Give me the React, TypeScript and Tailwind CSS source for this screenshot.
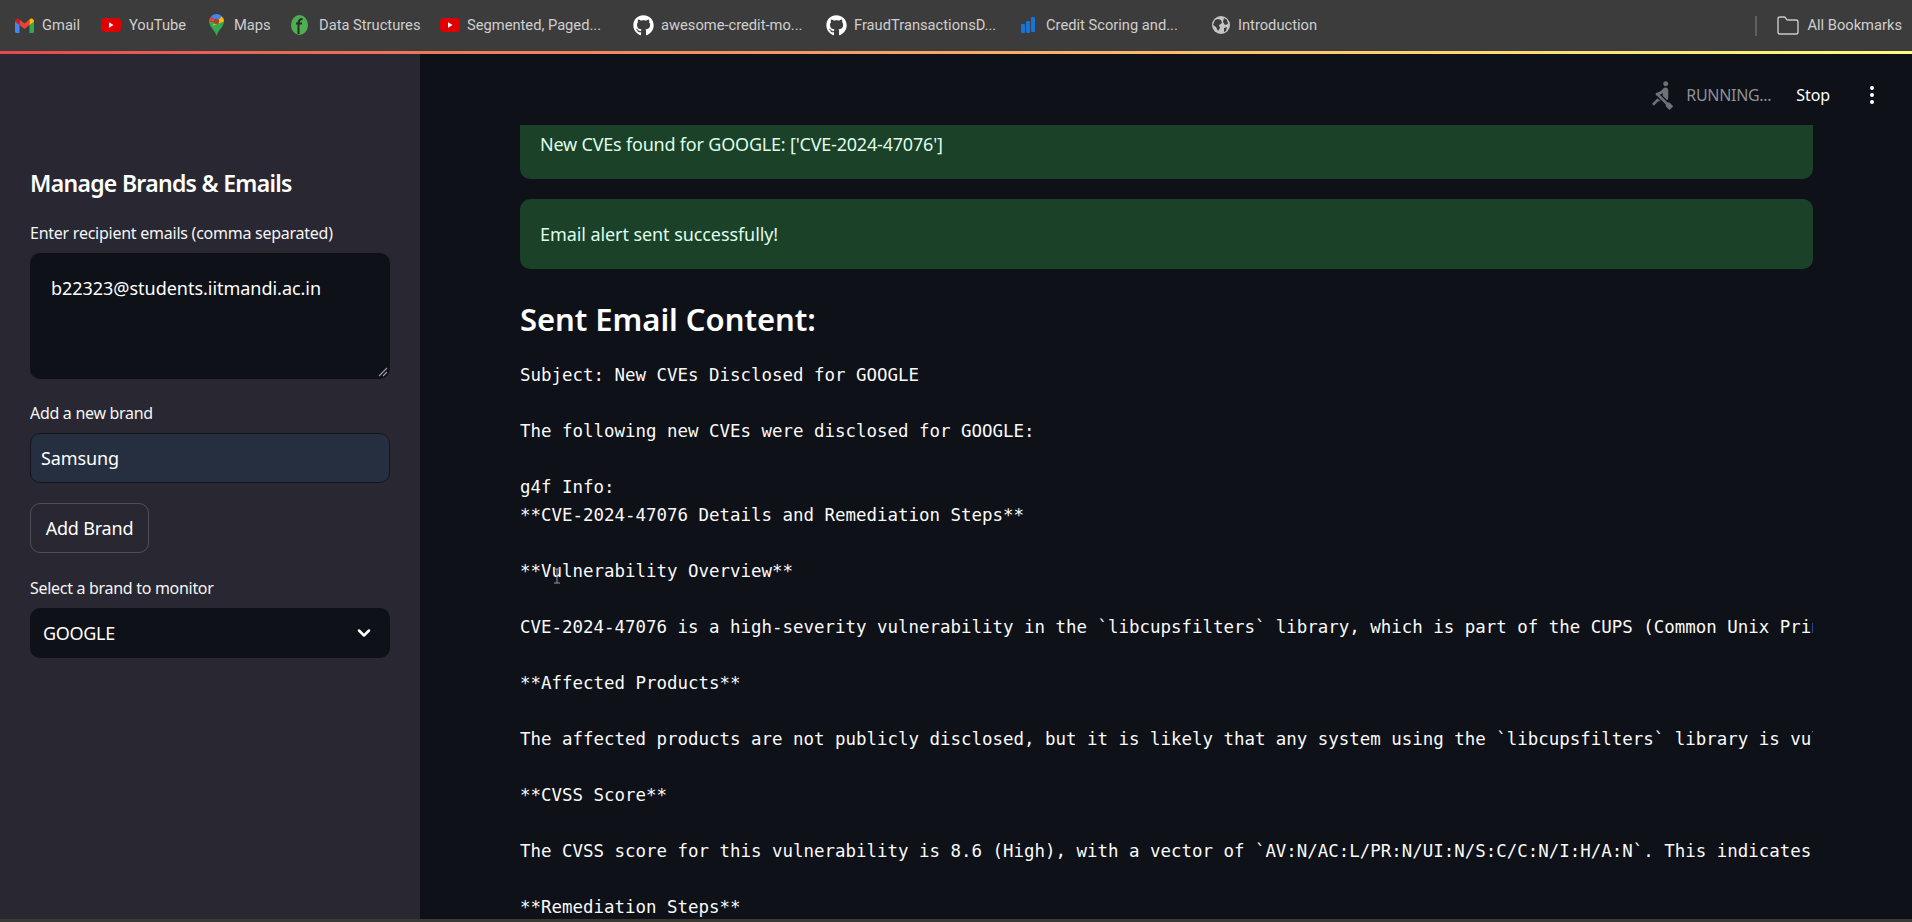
import { ChevronDown, Folder } from "lucide-react";
import { FaGithub } from "react-icons/fa";
import { MdRowing } from "react-icons/md";

const sans = "font-['Noto_Sans',sans-serif]";

function GmailIcon() {
  return (
    <svg width="19" height="15" viewBox="0 0 19 15">
      <path d="M0 3v10.5A1.5 1.5 0 0 0 1.5 15H4.500V6z" fill="#4285f4" />
      <path d="M19 3v10.500a1.500 1.500 0 0 1-1.500 1.500H14.500V6z" fill="#34a853" />
      <path d="M4.500 7V1.500L9.500 5.500l5-4V7l-5 4z" fill="#ea4335" />
      <path d="M0 3.500C0 1 2.800-.6 4.500 1.500V7L0 3.500z" fill="#c5221f" />
      <path d="M19 3.500C19 1 16.200-.6 14.500 1.500V7L19 3.500z" fill="#fbbc04" />
    </svg>
  );
}

function YoutubeIcon() {
  return (
    <svg width="20" height="14" viewBox="0 0 20 14">
      <rect width="20" height="14" rx="4" fill="#e00000" />
      <path d="M8 4.200v5.600L12.500 7z" fill="#fff" />
    </svg>
  );
}

function MapsIcon() {
  return (
    <svg width="15" height="22" viewBox="0 0 15 22">
      <path d="M7.500 22C6.500 17 0 12.500 0 7.500h15C15 12.500 8.500 17 7.500 22z" fill="#34a853" />
      <path d="M0 7.500A7.500 7.500 0 0 1 2.200 2.200L7.500 7.500z" fill="#ea4335" />
      <path d="M2.200 2.200A7.500 7.500 0 0 1 12.800 2.200L7.500 7.500z" fill="#4285f4" />
      <path d="M12.800 2.200A7.500 7.500 0 0 1 15 7.500L3 12z" fill="#fbbc04" />
      <circle cx="7.500" cy="7.500" r="2.700" fill="#a5442a" />
    </svg>
  );
}

function ForkIcon() {
  return (
    <svg width="17" height="20" viewBox="0 0 17 20">
      <ellipse cx="8.500" cy="10" rx="8.500" ry="10" fill="#4caf50" />
      <path d="M7.500 19V8.500c0-3 1.500-4.500 4-4.500M5 8.500h6" stroke="#2b2b2b" strokeWidth="2" fill="none" />
    </svg>
  );
}

function BarsIcon() {
  return (
    <svg width="14" height="17" viewBox="0 0 14 17">
      <rect x="0" y="7" width="4" height="9" rx="1" fill="#1a73d8" />
      <rect x="5" y="4" width="4" height="12" rx="1" fill="#1a73d8" />
      <rect x="10" y="0" width="4" height="15" rx="1" fill="#1a73d8" />
    </svg>
  );
}

function GlobeIcon() {
  return (
    <svg width="18" height="18" viewBox="0 0 18 18">
      <circle cx="9" cy="9" r="9" fill="#c4c4c4" />
      <path d="M3 4l3-1 3 1 1 3-3 2 1 3-2 3-2-4-3-2zM12 2l3 2 1 4-3 1-2-3zM12 12l3-1-1 4-2 1z" fill="#3c3c3c" />
    </svg>
  );
}

const bookmarks = [
  { icon: <GmailIcon />, label: "Gmail", cls: "ml-[15px] w-[86px]", gap: "w-[8px]" },
  { icon: <YoutubeIcon />, label: "YouTube", cls: "w-[108px]", gap: "w-[8px]" },
  { icon: <MapsIcon />, label: "Maps", cls: "w-[82px]", gap: "w-[10px]" },
  { icon: <ForkIcon />, label: "Data Structures", cls: "w-[149px]", gap: "w-[11px]" },
  { icon: <YoutubeIcon />, label: "Segmented, Paged...", cls: "w-[193px]", gap: "w-[7px]" },
  { icon: <FaGithub className="text-[21px] text-white" />, label: "awesome-credit-mo...", cls: "w-[193px]", gap: "w-[7px]" },
  { icon: <FaGithub className="text-[21px] text-white" />, label: "FraudTransactionsD...", cls: "w-[195px]", gap: "w-[7px]" },
  { icon: <BarsIcon />, label: "Credit Scoring and...", cls: "w-[191px]", gap: "w-[11px]" },
  { icon: <GlobeIcon />, label: "Introduction", cls: "", gap: "w-[8px]" },
];

const emailLines = [
  "Subject: New CVEs Disclosed for GOOGLE",
  "",
  "The following new CVEs were disclosed for GOOGLE:",
  "",
  "g4f Info:",
  "**CVE-2024-47076 Details and Remediation Steps**",
  "",
  "**Vulnerability Overview**",
  "",
  "CVE-2024-47076 is a high-severity vulnerability in the `libcupsfilters` library, which is part of the CUPS (Common Unix Printing System).",
  "",
  "**Affected Products**",
  "",
  "The affected products are not publicly disclosed, but it is likely that any system using the `libcupsfilters` library is vulnerable.",
  "",
  "**CVSS Score**",
  "",
  "The CVSS score for this vulnerability is 8.6 (High), with a vector of `AV:N/AC:L/PR:N/UI:N/S:C/C:N/I:H/A:N`. This indicates a network attack.",
  "",
  "**Remediation Steps**",
  "",
];

export default function App() {
  return (
    <div className={`flex h-[922px] w-[1912px] flex-col overflow-hidden bg-[#0e1117] ${sans}`}>
      {/* bookmarks bar */}
      <div className="flex h-[51px] shrink-0 items-center bg-[#3c3c3c] font-['Roboto',sans-serif] text-[14.7px] text-[#cfcfcf]">
        {bookmarks.map((b) => (
          <div key={b.label} className={`flex items-center ${b.cls}`}>
            {b.icon}
            <span className={`shrink-0 ${b.gap}`} />
            <span className="whitespace-nowrap">{b.label}</span>
          </div>
        ))}
        <div className="ml-auto flex items-center">
          <div className="h-[20px] w-[2px] bg-[#5f5f5f]" />
          <Folder className="ml-[19px] h-[24px] w-[24px] text-[#c8c8c8]" strokeWidth={1.4} />
          <span className="mr-[10px] ml-[7px] whitespace-nowrap">All Bookmarks</span>
        </div>
      </div>
      <div className="h-[3px] shrink-0 bg-gradient-to-r from-[#e5484d] to-[#fffd80]" />

      <div className="flex min-h-0 flex-1">
        {/* sidebar */}
        <aside className="flex w-[420px] shrink-0 flex-col bg-[#292832] px-[30px] pt-[114px] text-white">
          <h2 className="text-[23px] leading-[30px] font-semibold tracking-[-0.7px]">Manage Brands &amp; Emails</h2>
          <label className="mt-[23px] text-[16px] leading-[24px] tracking-[-0.25px] text-[#f5f5f5]">Enter recipient emails (comma separated)</label>
          <div className="relative mt-[8px] h-[126px] rounded-[10px] bg-[#0e1117] px-[21px] py-[21px] text-[18px] leading-[28px] tracking-[-0.03px]">
            b22323@students.iitmandi.ac.in
            <svg className="absolute right-[2px] bottom-[2px]" width="10" height="10" viewBox="0 0 10 10">
              <path d="M1 9l8-8M5 9l4-4" stroke="#9a9a9a" strokeWidth="1.200" />
            </svg>
          </div>
          <label className="mt-[22px] text-[16px] leading-[24px] tracking-[-0.3px] text-[#f5f5f5]">Add a new brand</label>
          <div className="mt-[8px] flex h-[50px] items-center rounded-[10px] border border-[#14161e] bg-[#262f40] px-[10px] text-[18px] tracking-[-0.1px]">
            Samsung
          </div>
          <button className="mt-[20px] h-[50px] w-[119px] rounded-[10px] border border-[#4f4f5a] text-[18px] tracking-[-0.2px]">Add Brand</button>
          <label className="mt-[23px] text-[16px] leading-[24px] tracking-[-0.3px] text-[#f5f5f5]">Select a brand to monitor</label>
          <div className="mt-[8px] flex h-[50px] items-center justify-between rounded-[10px] bg-[#0e1117] pr-[16px] pl-[13px] text-[18px] tracking-[-0.3px]">
            GOOGLE
            <ChevronDown className="h-[20px] w-[20px]" strokeWidth={3} />
          </div>
        </aside>

        {/* main */}
        <main className="flex min-w-0 flex-1 flex-col">
          <div className="flex h-[71px] shrink-0 items-center justify-end pt-[10px] pr-[38px]">
            <MdRowing className="mr-[9px] text-[30px] text-[#6f7176]" />
            <span className="mr-[25px] text-[16px] tracking-[-0.3px] text-[#8d9096]">RUNNING...</span>
            <span className="mr-[40px] text-[16px] tracking-[-0.1px] text-white">Stop</span>
            <div className="flex flex-col gap-[3px]">
              <span className="h-[4px] w-[4px] rounded-full bg-white" />
              <span className="h-[4px] w-[4px] rounded-full bg-white" />
              <span className="h-[4px] w-[4px] rounded-full bg-white" />
            </div>
          </div>
          <div className="relative min-h-0 flex-1 overflow-hidden pr-[99px] pl-[100px]">
            <div className="-mt-[16px] flex h-[70px] items-center rounded-[10px] bg-[#1b4129] px-[20px] text-[18px] tracking-[-0.2px] text-[#dffde9]">
              New CVEs found for GOOGLE: ['CVE-2024-47076']
            </div>
            <div className="mt-[20px] flex h-[70px] items-center rounded-[10px] bg-[#1b4129] px-[20px] text-[18px] tracking-[-0.08px] text-[#dffde9]">
              Email alert sent successfully!
            </div>
            <h1 className="mt-[30px] text-[31px] leading-[40px] font-semibold tracking-[-0.05px] text-white">Sent Email Content:</h1>
            <pre className="mt-[22px] overflow-hidden font-['DejaVu_Sans_Mono',monospace] text-[17.45px] leading-[28px] text-[#fafafa]">
              {emailLines.join("\n")}
            </pre>
            {/* text cursor */}
            <svg className="absolute top-[443px] left-[133px]" width="8" height="16" viewBox="0 0 8 16">
              <path d="M1 1h6M4 1v14M1 15h6" stroke="#9a9a9a" strokeWidth="1" fill="none" />
            </svg>
          </div>
        </main>
      </div>
      <div className="h-[3px] shrink-0 bg-[#3a3a32]" />
    </div>
  );
}
